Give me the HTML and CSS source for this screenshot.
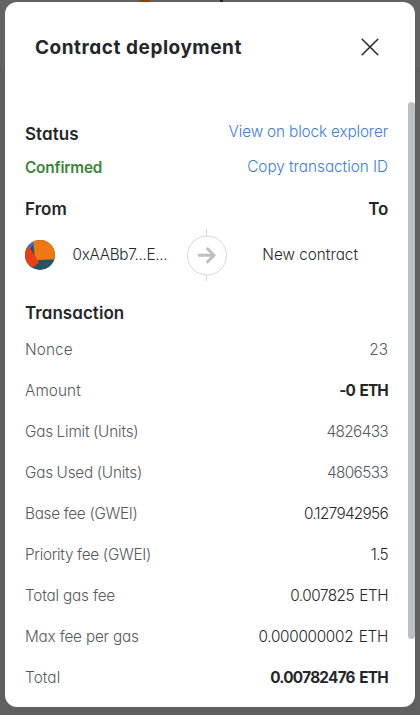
FILE: index.html
```html
<!DOCTYPE html>
<html lang="en">
<head>
<meta charset="utf-8">
<title>Contract deployment</title>
<link rel="stylesheet" href="styles.css">
</head>
<body>
<span class="spot spot-orange"></span>
<span class="spot spot-dark"></span>
<main class="modal">
  <header class="header">
    <h1 class="title">Contract deployment</h1>
    <svg class="close" width="18" height="18" viewBox="0 0 18 18"><path d="M1.2 1.2 16.8 16.8M16.8 1.2 1.2 16.8"/></svg>
  </header>
  <div class="content">
    <div class="line status-line"><h2 class="heading">Status</h2><a class="link link-view">View on block explorer</a></div>
    <div class="line confirm-line"><span class="confirmed">Confirmed</span><a class="link link-copy">Copy transaction ID</a></div>
    <div class="line people-line"><h2 class="heading">From</h2><h2 class="heading to">To</h2></div>
    <div class="parties">
      <div class="party sender">
        <svg class="avatar" width="30" height="30" viewBox="0 0 30 30">
          <defs><clipPath id="disc"><circle cx="15" cy="15" r="15"/></clipPath></defs>
          <g clip-path="url(#disc)">
            <path fill="#245563" d="M0 0h30v30H0z"/>
            <path fill="#3d65e2" d="M0 0h8.3v4.5L4.5 9.5 0 6z"/>
            <path fill="#ec7913" d="M8 0h22v19.3L10.2 20.3z"/>
            <path fill="#e93f12" d="M4 6.6 14.2 22.5 6 29H0V7z"/>
          </g>
        </svg>
        <span class="address">0xAABb7...E...</span>
      </div>
      <div class="arrow">
        <svg width="40" height="52" viewBox="0 0 40 52">
          <path class="ring" d="M19.5 0v7M19.5 46v7"/>
          <circle class="ring" cx="20" cy="26.5" r="19.5"/>
          <path class="head" d="M12.3 26.3H27M20.6 19.8l6.6 6.5-6.6 6.5"/>
        </svg>
      </div>
      <div class="party recipient"><span class="new-contract">New contract</span></div>
    </div>
    <h2 class="heading section">Transaction</h2>
    <dl class="rows">
      <div class="row"><dt>Nonce</dt><dd class="muted">23</dd></div>
      <div class="row"><dt>Amount</dt><dd class="strong amount">-0 ETH</dd></div>
      <div class="row"><dt class="units">Gas Limit (Units)</dt><dd class="muted units-value">4826433</dd></div>
      <div class="row"><dt class="units">Gas Used (Units)</dt><dd class="muted units-value">4806533</dd></div>
      <div class="row"><dt class="gwei">Base fee (GWEI)</dt><dd class="gwei-value">0.127942956</dd></div>
      <div class="row"><dt class="gwei">Priority fee (GWEI)</dt><dd class="gwei-value">1.5</dd></div>
      <div class="row"><dt class="fee">Total gas fee</dt><dd class="fee-value">0.007825 ETH</dd></div>
      <div class="row"><dt class="fee">Max fee per gas</dt><dd class="max-value">0.000000002 ETH</dd></div>
      <div class="row"><dt>Total</dt><dd class="strong total-value">0.00782476 ETH</dd></div>
    </dl>
  </div>
  <span class="scrollbar"></span>
</main>
</body>
</html>
```
FILE: styles.css
```css
* { box-sizing: border-box; margin: 0; padding: 0; }
body {
  height: 715px;
  padding: 2px 5px 8px;
  overflow: hidden;
  background: linear-gradient(#636363 0 67px, #5f5f5f 67px);
  color: #24272a;
  font: 360 15.3px/20px Inter, "Liberation Sans", sans-serif;
  font-feature-settings: "cv11";
}
.modal {
  position: relative;
  height: 705px;
  background: #fff;
  border-radius: 12px;
}
.spot { position: absolute; top: 0; }
.spot-orange { left: 139px; width: 11px; height: 2px; background: #8a4108; border-radius: 6px 6px 0 0; }
.spot-dark { left: 220px; width: 3px; height: 2px; background: #222; }
.header {
  display: flex;
  justify-content: space-between;
  align-items: center;
  height: 90px;
  padding: 0 36px 0 30px;
}
.title { padding-top: 2px; font-size: 19px; font-weight: 700; line-height: 26px; letter-spacing: .52px; }
.close { fill: none; stroke: #24272a; stroke-width: 1.5; stroke-linecap: round; }
.content { padding: 22px 27px 0 20px; }
.line { display: flex; justify-content: space-between; }
.status-line { height: 36px; }
.status-line .heading { padding-top: 10px; }
.status-line .link { padding-top: 8px; }
.confirm-line { height: 38px; padding-top: 7px; }
.people-line { height: 40px; padding-top: 11px; }
.heading { font-size: 17px; font-weight: 600; line-height: 20px; letter-spacing: .05px; }
.to { letter-spacing: -.3px; }
.link { color: #3b7ddd; }
.link-view { letter-spacing: -.14px; }
.link-copy { letter-spacing: -.02px; }
.confirmed { padding-top: 1px; color: #3a8535; font-weight: 600; letter-spacing: -.15px; }
.parties { display: flex; height: 53px; align-items: center; }
.party { display: flex; align-items: center; flex: 1; }
.sender { flex: 0 0 162px; gap: 17.5px; }
.address { letter-spacing: -.32px; }
.recipient { justify-content: flex-end; padding-right: 30px; }
.new-contract { letter-spacing: 0; }
.arrow { width: 40px; height: 52px; }
.ring { fill: none; stroke: #d6d9dc; }
.head { fill: none; stroke: #bbc0c5; stroke-width: 3; stroke-linecap: round; stroke-linejoin: round; }
.section { padding-top: 22px; }
.rows { padding-top: 6px; }
.row { display: flex; justify-content: space-between; align-items: center; height: 41px; }
.row dt, .muted { color: #535a61; }
.row dt { letter-spacing: .1px; }
.strong { font-weight: 700; }
.amount { letter-spacing: -.8px; word-spacing: 1.5px; }
.row .units { letter-spacing: -.18px; word-spacing: -.5px; }
.units-value { letter-spacing: -.6px; }
.row .gwei { letter-spacing: -.3px; }
.gwei-value { letter-spacing: -.68px; }
.row .fee { letter-spacing: -.18px; }
.fee-value { letter-spacing: -.5px; word-spacing: 1.5px; }
.max-value { letter-spacing: -.3px; word-spacing: 1.5px; }
.total-value { letter-spacing: -.72px; word-spacing: 1.5px; }
.scrollbar { position: absolute; top: 100px; right: 0; width: 7px; height: 537px; border-radius: 4px; background: #bbc0c5; }
```
